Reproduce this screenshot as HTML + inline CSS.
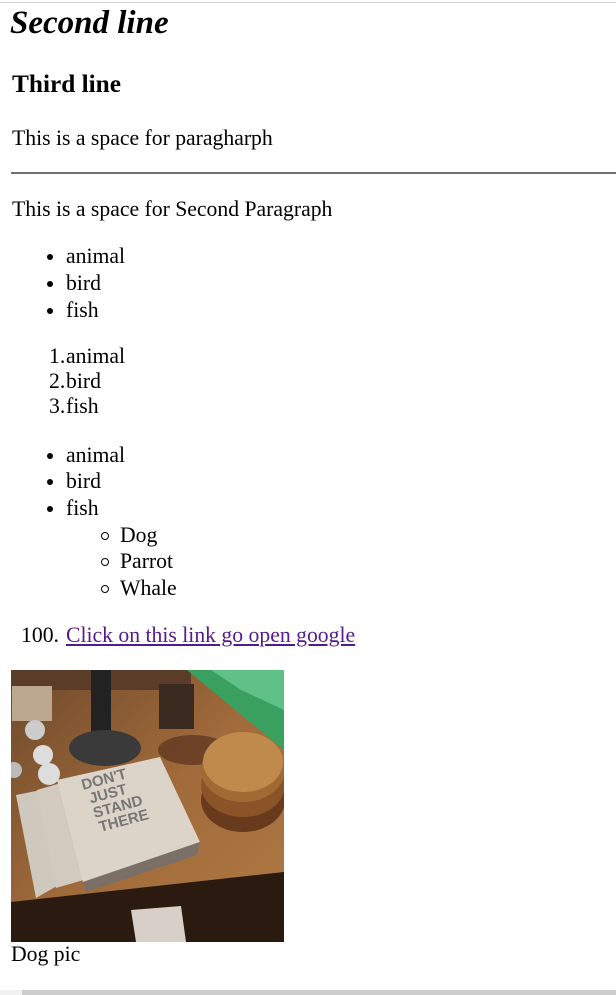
<!DOCTYPE html>
<html><head><meta charset="utf-8"><style>
html,body{margin:0;padding:0;background:#fff;width:616px;height:995px;overflow:hidden;position:relative;font-family:"Liberation Serif",serif;color:#000}
.l{position:absolute;font-size:21.7px;line-height:24px;white-space:nowrap}
.b{position:absolute;width:6px;height:6px;border-radius:50%;background:#000}
.c{position:absolute;border-radius:50%;border:1px solid #000;box-sizing:border-box;width:8px;height:8px}
a{color:#551a8b;text-decoration:underline}
</style></head><body>
<div style="position:absolute;left:0;top:2px;width:616px;height:1px;background:#d0d0d0"></div>
<div class="l" style="left:10px;top:5px;font-size:33px;line-height:36px;font-weight:bold;font-style:italic">Second line</div>
<div class="l" style="left:12px;top:71px;font-size:25.3px;line-height:26px;font-weight:bold">Third line</div>
<div class="l" style="left:12px;top:126px">This is a space for paragharph</div>
<div style="position:absolute;left:11px;top:172px;width:605px;height:2px;background:#707070"></div>
<div class="l" style="left:12px;top:197px">This is a space for Second Paragraph</div>

<div class="b" style="left:47px;top:254px"></div><div class="l" style="left:66px;top:244px">animal</div>
<div class="b" style="left:47px;top:281px"></div><div class="l" style="left:66px;top:271px">bird</div>
<div class="b" style="left:47px;top:308px"></div><div class="l" style="left:66px;top:298px">fish</div>

<div class="l" style="left:49px;top:344px">1.</div><div class="l" style="left:66px;top:344px">animal</div>
<div class="l" style="left:49px;top:369px">2.</div><div class="l" style="left:66px;top:369px">bird</div>
<div class="l" style="left:49px;top:394px">3.</div><div class="l" style="left:66px;top:394px">fish</div>

<div class="b" style="left:47px;top:453px"></div><div class="l" style="left:66px;top:443px">animal</div>
<div class="b" style="left:47px;top:479px"></div><div class="l" style="left:66px;top:469px">bird</div>
<div class="b" style="left:47px;top:506px"></div><div class="l" style="left:66px;top:496px">fish</div>
<div class="c" style="left:101px;top:532px"></div><div class="l" style="left:120px;top:523px">Dog</div>
<div class="c" style="left:101px;top:558px"></div><div class="l" style="left:120px;top:549px">Parrot</div>
<div class="c" style="left:101px;top:585px"></div><div class="l" style="left:120px;top:576px">Whale</div>

<div class="l" style="left:21px;top:623px">100.</div><div class="l" style="left:66px;top:623px"><a>Click on this link go open google</a></div>

<svg style="position:absolute;left:11px;top:670px" width="273" height="272" viewBox="0 0 273 272">
<defs><linearGradient id="w" x1="0" y1="0" x2="1" y2="1"><stop offset="0" stop-color="#6e4a2c"/><stop offset=".5" stop-color="#a06a3a"/><stop offset="1" stop-color="#b07a45"/></linearGradient></defs>
<rect width="273" height="272" fill="url(#w)"/>
<rect width="180" height="20" fill="#5a3c28"/>
<polygon points="176,0 273,0 273,80" fill="#3aa060"/>
<polygon points="200,0 273,0 273,40 230,20" fill="#5fc088"/>
<polygon points="0,232 273,202 273,272 0,272" fill="#2a1a10"/>
<polygon points="120,240 170,236 175,272 125,272" fill="#d8d0c8"/>
<rect x="1" y="16" width="40" height="35" fill="#bca890"/>
<rect x="80" y="0" width="20" height="78" fill="#222"/>
<ellipse cx="94" cy="78" rx="36" ry="18" fill="#3a3a3a"/>
<rect x="148" y="14" width="35" height="45" fill="#3a2a20"/>
<ellipse cx="182" cy="80" rx="35" ry="15" fill="#5a3220" opacity=".7"/>
<circle cx="24" cy="60" r="10" fill="#ccc"/><circle cx="32" cy="85" r="10" fill="#ddd"/><circle cx="38" cy="104" r="11" fill="#ddd"/><circle cx="3" cy="100" r="8" fill="#bbb"/>
<ellipse cx="232" cy="130" rx="42" ry="32" fill="#6a3a1c"/>
<ellipse cx="232" cy="115" rx="42" ry="32" fill="#8a5428"/>
<ellipse cx="232" cy="100" rx="42" ry="32" fill="#a06a34"/>
<ellipse cx="232" cy="92" rx="40" ry="30" fill="#c08a4c"/>
<polygon points="5,125 40,118 65,205 25,228" fill="#cfc8bc"/>
<polygon points="26,120 60,110 90,205 45,218" fill="#d2cabf"/>
<polygon points="46,110 149,87 189,172 72,212" fill="#dcd4c8"/>
<polygon points="72,212 189,172 186,185 75,222" fill="#7a7068"/>
<g transform="translate(72,120) rotate(-15)" font-family="Liberation Sans,sans-serif" font-weight="bold" fill="#777" font-size="15">
<text x="0" y="0">DON'T</text><text x="4" y="15">JUST</text><text x="4" y="30">STAND</text><text x="6" y="45">THERE</text></g>
</svg>
<div class="l" style="left:11px;top:942px">Dog pic</div>
<div style="position:absolute;left:0;top:990px;width:616px;height:5px;background:#f1f1f1"></div>
<div style="position:absolute;left:22px;top:990px;width:594px;height:5px;background:#cdcdcd"></div>
</body></html>
